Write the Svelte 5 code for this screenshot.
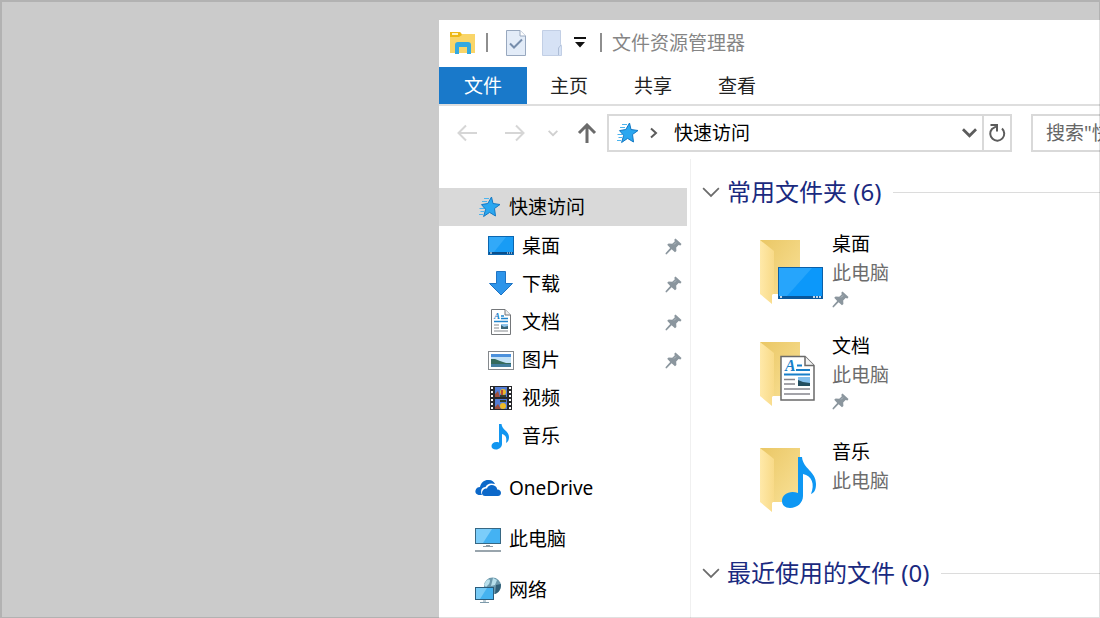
<script>
  let showFolders = $state(true);
  let showRecent = $state(true);

  const tabs = ['主页', '共享', '查看'];

  const pinned = [
    { name: '桌面', icon: 'desktop', pin: true },
    { name: '下载', icon: 'download', pin: true },
    { name: '文档', icon: 'document', pin: true },
    { name: '图片', icon: 'picture', pin: true },
    { name: '视频', icon: 'video', pin: false },
    { name: '音乐', icon: 'music', pin: false },
  ];

  const places = [
    { name: 'OneDrive', icon: 'onedrive' },
    { name: '此电脑', icon: 'computer' },
    { name: '网络', icon: 'network' },
  ];

  const folders = [
    { name: '桌面', place: '此电脑', icon: 'desktop', pin: true },
    { name: '文档', place: '此电脑', icon: 'document', pin: true },
    { name: '音乐', place: '此电脑', icon: 'music', pin: false },
  ];
</script>

{#snippet star()}
  <svg width="26" height="24" viewBox="0 0 26 24" aria-hidden="true">
    <path d="M16.500 2 L18 8.500 L25 9.500 L19.500 13.500 L20.500 21 L14.600 17.400 L8.600 21.500 L10.600 14.400 L6.500 9.600 L12.800 8.500 Z" fill="#2aa7f0" stroke="#1479c4" stroke-width="1" />
    <path d="M9 3.500 H14 M7 6.500 H12 M4.500 13.500 H9 M5.500 16.500 H9 M4 19.500 H8" stroke="#4db4ee" stroke-width="1.200" />
  </svg>
{/snippet}

{#snippet pin()}
  <svg class="pin" width="17" height="17" viewBox="0 0 17 17" aria-hidden="true">
    <path d="M10.500 0.500 L16.500 6 L15.500 7.500 L13.600 7 L11.200 9.400 L11.400 13 L10 14.200 L6.600 11.200 L1.500 16.400 L0.500 16 L0.700 15 L5.200 10 L2.200 6.800 L3.600 5.400 L7.200 5.800 L9.700 3.400 L9.400 1.600 Z" fill="#8b969e" />
    <path d="M9 6.500 L11 4.500" stroke="#b4bdc3" stroke-width="1" />
  </svg>
{/snippet}

{#snippet chevron(width, color, weight)}
  <svg {width} height={width} viewBox="0 0 16 16" fill="none" aria-hidden="true">
    <path d="M1 4.500 L8 11.500 L15 4.500" stroke={color} stroke-width={weight} />
  </svg>
{/snippet}

{#snippet glyph(name)}
  <svg width="26" height="28" viewBox="0 0 26 28" aria-hidden="true">
    {#if name === 'desktop'}
      <rect x="0.500" y="4.500" width="25" height="18" fill="#189cf5" stroke="#0b66b0" />
      <path d="M1 5 H18 L6 20 H1 Z" fill="#32a9f8" />
      <rect x="1" y="20" width="24" height="2" fill="#0a4f8c" />
      <path d="M2 21 H4 M19 21 H20 M21 21 H22 M23 21 H24" stroke="#fff" stroke-width="1" />
    {:else if name === 'download'}
      <path d="M8.500 1.500 H17.500 V13.500 H24.500 L13 25 L1.500 13.500 H8.500 Z" fill="#2e95ea" stroke="#1f74c4" />
    {:else if name === 'document'}
      <path d="M3.500 1.500 H17 L22.500 7 V26.500 H3.500 Z" fill="#fff" stroke="#74777a" />
      <path d="M17 1.500 V7 H22.500" fill="#eee" stroke="#74777a" />
      <text x="6" y="11" class="mini-letter">A</text>
      <path d="M13 8 H16 M13 10.500 H20 M6 13.500 H20" stroke="#2184cc" stroke-width="1.500" />
      <path d="M6 17 H11 M6 20 H11 M6 23 H20" stroke="#85898d" />
      <rect x="13" y="16" width="7" height="5" fill="#3a6576" />
      <path d="M13 16 H20 V18 L16 19 L13 17 Z" fill="#8fc5ed" />
    {:else if name === 'picture'}
      <rect x="0.500" y="5.500" width="25" height="18" fill="#fff" stroke="#85898d" />
      <rect x="3" y="8" width="20" height="13" fill="#c3e2f7" />
      <rect x="3" y="8" width="20" height="3" fill="#4c91dc" />
      <path d="M3 13 L7 13 L12 15 L18 17 L23 17 V18 H3 Z" fill="#356a5c" />
      <rect x="3" y="18" width="20" height="3" fill="#437e9e" />
    {:else if name === 'video'}
      <rect x="2" y="2" width="22" height="24" fill="#26272a" />
      <path d="M4 3 V26 M22 3 V26" stroke="#fff" stroke-width="2" stroke-dasharray="2 2" />
      <rect x="7" y="3" width="12" height="10" fill="#557ed4" />
      <rect x="7" y="15" width="12" height="10" fill="#557ed4" />
      <path d="M7 10 L10 7 L12 13 H7 Z M7 23 L10 20 L13 25 H7 Z" fill="#9d4e3d" />
      <circle cx="15" cy="8" r="3" fill="#e8b82c" />
      <circle cx="15" cy="22" r="3" fill="#efbc26" />
      <path d="M12 12 H18 M12 17 H18" stroke="#34412b" stroke-width="2" />
      <path d="M14 6 V11" stroke="#bc4c30" stroke-width="2" />
    {:else if name === 'music'}
      <path d="M11 2 H13.500 C14 8 21 9 21 15 C21 18 20 20 18 21 C19 16 18 13 14 12 V22 C14 25 11 27.500 8 27.500 C5 27.500 3.500 26 3.500 24 C3.500 21 7 19 11 20.500 Z" fill="#1296f0" />
    {:else if name === 'onedrive'}
      <path d="M5 21 C1 21 0 18.500 0.500 16.500 C1 14 3 13 5 13 C6 8 10 5.500 14 6 C17 6 19 8 20 10 C15 8.500 12 10 10.500 13 C6.500 13 5 17 7 21 Z" fill="#0c68c9" />
      <path d="M10 22 C7 22 6.500 19 7.500 17 C8.500 15 10 14.500 12 14.500 C13 11 17 10 20 12 C21.500 13 22 14 22.200 15.500 C25 15.500 26 17.500 26 19 C26 21 24.500 22 23 22 Z" fill="#0c68c9" />
    {:else if name === 'computer'}
      <rect x="0.500" y="3.500" width="25" height="15" fill="#44b2f3" stroke="#376783" />
      <path d="M1 4 H17 L8 18 H1 Z" fill="#7bcdfa" />
      <path d="M8 21.500 H18" stroke="#8d9ba4" />
      <path d="M11 20.500 H15" stroke="#8d9ba4" />
      <rect x="0" y="25" width="26" height="2" fill="#99a5ad" />
    {:else if name === 'network'}
      <circle cx="17.500" cy="10" r="8.500" fill="#6d99ac" />
      <path d="M11 5 C15 2 16 4 14 8 L11 11 L9 9 Z M18 2 L22 4 L20 9 L16 10 Z" fill="#b9e0ec" />
      <path d="M21 9 L26 8 C26 14 23 17 20 18 Z" fill="#315f78" />
      <rect x="0.500" y="11.500" width="18" height="12" fill="#45b3f0" stroke="#2a5c7c" />
      <path d="M1 12 H12 L5 23 H1 Z" fill="#78cbf6" />
      <path d="M5 26.500 H14 M8 25 H11" stroke="#7d9aaa" />
    {/if}
  </svg>
{/snippet}

{#snippet folder(name)}
  <svg width="64" height="66" viewBox="0 0 64 66" aria-hidden="true">
    <defs>
      <linearGradient id="back-{name}" x1="0" y1="0" x2="1" y2="1">
        <stop offset="0" stop-color="#eac765" />
        <stop offset="1" stop-color="#f9e197" />
      </linearGradient>
      <linearGradient id="front-{name}" x1="0" y1="0" x2="1" y2="0">
        <stop offset="0" stop-color="#ffe9a9" />
        <stop offset="1" stop-color="#f8da88" />
      </linearGradient>
    </defs>
    <path d="M1 1 H41 V55 H12 Z" fill="url(#back-{name})" />
    <path d="M1 1 L15 12 V54 L13 56 V65 L1 55 Z" fill="url(#front-{name})" />
    {#if name === 'desktop'}
      <rect x="19.500" y="28.500" width="44" height="31" fill="#0c98fa" stroke="#0b5fa8" />
      <path d="M20 29 H53 L28 57 H20 Z" fill="#26a5fc" />
      <rect x="20" y="57" width="43" height="3" fill="#08579c" />
      <path d="M21 58 H23 M54 58 H56 M57 58 H59 M60 58 H62" stroke="#fff" stroke-width="1.500" />
    {:else if name === 'document'}
      <path d="M22 15.500 H46 L55 24.500 V59 H22 Z" fill="#fff" stroke="#6a6a6a" stroke-width="1.500" />
      <path d="M46 15.500 V24.500 H55" fill="#f3f3f3" stroke="#6a6a6a" stroke-width="1.500" />
      <text x="26" y="30" class="big-letter">A</text>
      <path d="M38 24.500 H43 M37 29 H51 M25 33.500 H51" stroke="#187fc9" stroke-width="2" />
      <path d="M25 38.500 H36 M25 43 H36 M25 48 H51 M25 53 H51" stroke="#85858d" stroke-width="1.500" />
      <rect x="39" y="36" width="12" height="9" fill="#83bfed" />
      <path d="M39 39 L44 41 L51 42 V45 H39 Z" fill="#234e60" />
    {:else if name === 'music'}
      <path d="M39 10 H43 C44 22 57 24 57 37 C57 43 55 46 52 47 C56 37 53 29 44 27 V49 C44 56 38 61 31 61 C26 61 23 58 23 54 C23 47 31 43 39 46 Z" fill="#0e97f3" />
    {/if}
  </svg>
{/snippet}

<div class="desktop">
  <main class="window">
    <header class="titlebar">
      <svg width="26" height="24" viewBox="0 0 26 24" aria-hidden="true">
        <path d="M0 1 H10 L12 3 H25 V22 H0 Z" fill="#f9d568" />
        <path d="M0 1 H10 L12 4 L9 6 H0 Z" fill="#edb818" />
        <path d="M2 3 H8" stroke="#fff3bf" stroke-width="2" />
        <path d="M5 23 V14 Q5 11 8 11 H18 Q21 11 21 14 V23 H17 V16 H9 V23 Z" fill="#32a9e2" />
      </svg>
      <span class="divider"></span>
      <button class="quick" aria-label="属性">
        <svg width="20" height="26" viewBox="0 0 20 26" aria-hidden="true">
          <path d="M0.500 0.500 H14 L19.500 6 V25.500 H0.500 Z" fill="#e3ecf8" stroke="#98a8bf" />
          <path d="M14 0.500 V6 H19.500" fill="#fff" stroke="#98a8bf" />
          <path d="M4 13.500 L8 17.500 L16 9.500" fill="none" stroke="#778eac" stroke-width="2" />
        </svg>
      </button>
      <button class="quick" aria-label="新建文件夹">
        <svg width="20" height="26" viewBox="0 0 20 26" aria-hidden="true">
          <path d="M0.500 0.500 H18.500 V14 L19.500 16 V25.500 H0.500 Z" fill="#d6e2f5" stroke="#c2cfe5" />
          <path d="M16.500 25 V18 L19 15" fill="none" stroke="#aebed7" />
        </svg>
      </button>
      <button class="quick narrow" aria-label="自定义快速访问工具栏">
        <svg width="12" height="11" viewBox="0 0 12 11" aria-hidden="true">
          <path d="M0 0 H12 V2 H0 Z M1 5 H11 L6 10.500 Z" fill="#111" />
        </svg>
      </button>
      <span class="divider"></span>
      <h1>文件资源管理器</h1>
    </header>

    <nav class="tabs">
      <button class="tab file">文件</button>
      {#each tabs as tab}
        <button class="tab">{tab}</button>
      {/each}
    </nav>

    <div class="toolbar">
      <button class="arrow" aria-label="后退">
        <svg width="20" height="20" viewBox="0 0 20 20" aria-hidden="true">
          <path d="M20 10 H2 M9 2.500 L1.500 10 L9 17.500" fill="none" stroke="#d6d6d6" stroke-width="2" />
        </svg>
      </button>
      <button class="arrow" aria-label="前进">
        <svg width="20" height="20" viewBox="0 0 20 20" aria-hidden="true">
          <path d="M0 10 H18 M11 2.500 L18.500 10 L11 17.500" fill="none" stroke="#d6d6d6" stroke-width="2" />
        </svg>
      </button>
      <button class="history" aria-label="最近浏览的位置">{@render chevron(10, '#d0d0d0', 3)}</button>
      <button class="up" aria-label="上移">
        <svg width="20" height="20" viewBox="0 0 20 20" aria-hidden="true">
          <path d="M10 20 V2 M2 10 L10 2 L18 10" fill="none" stroke="#6b6b6b" stroke-width="3" />
        </svg>
      </button>
      <div class="address">
        {@render star()}
        <svg class="crumb-arrow" width="8" height="12" viewBox="0 0 8 12" aria-hidden="true">
          <path d="M1 1.500 L6 6 L1 10.500" fill="none" stroke="#5c5c5c" stroke-width="2" />
        </svg>
        <button class="crumb">快速访问</button>
        <button class="drop" aria-label="以前的位置">{@render chevron(15, '#5c5c5c', 3)}</button>
        <button class="refresh" aria-label="刷新">
          <svg width="18" height="20" viewBox="0 0 18 20" aria-hidden="true">
            <path d="M14 5.500 A7 7 0 1 1 4 6 L8 3.500" fill="none" stroke="#5c5c5c" stroke-width="2" />
            <path d="M2.500 2 H9 V8.500" fill="none" stroke="#5c5c5c" stroke-width="2" />
          </svg>
        </button>
      </div>
      <input class="search" type="search" aria-label="搜索" placeholder={'搜索"快速访问"'} />
    </div>

    <div class="body">
      <nav class="sidebar">
        <a class="row selected" href="#quick">{@render star()}<span>快速访问</span></a>
        <ul class="pinned">
          {#each pinned as item}
            <li>
              <a class="row child" href="#{item.icon}">
                {@render glyph(item.icon)}
                <span>{item.name}</span>
                {#if item.pin}{@render pin()}{/if}
              </a>
            </li>
          {/each}
        </ul>
        <ul class="places">
          {#each places as item}
            <li><a class="row" href="#{item.icon}">{@render glyph(item.icon)}<span>{item.name}</span></a></li>
          {/each}
        </ul>
      </nav>

      <section class="content">
        <h2>
          <button aria-expanded={showFolders} onclick={() => (showFolders = !showFolders)}>
            {@render chevron(18, '#6b6b6b', 1.5)}常用文件夹 (6)
          </button>
        </h2>
        {#if showFolders}
          <ul class="tiles">
            {#each folders as item}
              <li class="tile" class:unpinned={!item.pin}>
                {@render folder(item.icon)}
                <div class="label">
                  <p class="name">{item.name}</p>
                  <p class="place">{item.place}</p>
                  {#if item.pin}{@render pin()}{/if}
                </div>
              </li>
            {/each}
          </ul>
        {/if}
        <h2>
          <button aria-expanded={showRecent} onclick={() => (showRecent = !showRecent)}>
            {@render chevron(18, '#6b6b6b', 1.5)}最近使用的文件 (0)
          </button>
        </h2>
      </section>
    </div>
  </main>
</div>

<style>
  .desktop {
    position: relative;
    display: flex;
    box-sizing: border-box;
    min-height: 100vh;
    padding: 20px 0 0 439px;
    overflow: hidden;
    background: #cbcbcb;
    color: #000;
    font-family: "Noto Sans", "Noto Sans CJK SC", sans-serif;
    font-size: 19px;
    line-height: 28px;
  }

  /* thin frame lying over everything */
  .desktop::after {
    content: "";
    position: absolute;
    inset: 0;
    border: solid rgba(0, 0, 0, 0.12);
    border-width: 2px 1px 1px 2px;
    pointer-events: none;
  }

  .window {
    display: flex;
    flex: 1;
    flex-direction: column;
    min-width: 0;
    background: #fff;
  }

  svg {
    display: block;
    flex: none;
  }

  button {
    display: flex;
    flex: none;
    align-items: center;
    justify-content: center;
    padding: 0;
    border: 0;
    background: none;
    color: inherit;
    font: inherit;
  }

  ul {
    margin: 0;
    padding: 0;
    list-style: none;
  }

  a {
    color: inherit;
    text-decoration: none;
  }

  /* Title bar */
  .titlebar {
    display: flex;
    align-items: center;
    box-sizing: border-box;
    height: 47px;
    padding: 0 0 2px 11px;
  }

  .divider {
    width: 2px;
    height: 19px;
    margin: 0 10px;
    background: #8e8e8e;
  }

  .quick {
    width: 36px;
    height: 36px;
  }

  .quick.narrow {
    width: 20px;
  }

  h1 {
    margin: 0;
    color: #858585;
    font-size: 19px;
    font-weight: 400;
  }

  /* Ribbon tabs */
  .tabs {
    display: flex;
    border-bottom: 2px solid #dedede;
  }

  .tab {
    width: 84px;
    height: 37px;
    color: #222;
  }

  .tab.file {
    width: 88px;
    background: #1979ca;
    color: #fff;
  }

  /* Navigation and address */
  .toolbar {
    display: flex;
    align-items: center;
    height: 53px;
    overflow: hidden;
  }

  .arrow {
    width: 48px;
    height: 37px;
  }

  .arrow:first-child {
    margin-left: 4px;
  }

  .history {
    width: 28px;
    height: 37px;
  }

  .up {
    width: 40px;
    height: 37px;
  }

  .address {
    display: flex;
    flex: 0 0 405px;
    align-items: center;
    box-sizing: border-box;
    height: 38px;
    padding-left: 4px;
    border: 2px solid #d9d9d9;
  }

  .crumb-arrow {
    margin: 0 16px 0 11px;
  }

  .drop {
    width: 26px;
    height: 34px;
    margin-left: auto;
  }

  .refresh {
    width: 28px;
    height: 34px;
    border-left: 2px solid #d9d9d9;
  }

  .search {
    flex: 0 0 240px;
    box-sizing: border-box;
    height: 38px;
    margin: 0 0 0 19px;
    padding: 0 13px;
    border: 2px solid #d9d9d9;
    border-radius: 0;
    background: #fff;
    font: inherit;
    outline: none;
  }

  .search::placeholder {
    color: #666;
    opacity: 1;
  }

  .body {
    display: flex;
    flex: 1;
  }

  /* Sidebar */
  .sidebar {
    flex: 0 0 252px;
    box-sizing: border-box;
    padding: 29px 3px 0 0;
    border-right: 1px solid #f0f0f0;
  }

  .row {
    display: flex;
    align-items: center;
    gap: 8px;
    height: 38px;
    padding: 0 5px 0 36px;
  }

  .row.selected {
    background: #d9d9d9;
  }

  .row.child {
    padding-left: 49px;
  }

  .row .pin {
    margin-left: auto;
  }

  .pinned {
    padding: 1px 0;
  }

  .places li {
    padding-top: 13px;
  }

  /* Folder groups */
  .content {
    flex: 1;
    min-width: 0;
    padding: 15px 0 0 11px;
  }

  h2 {
    display: flex;
    align-items: center;
    gap: 12px;
    margin: 0 0 6px;
    color: #1a2a80;
    font-size: 24px;
    font-weight: 400;
    line-height: 36px;
  }

  h2::after {
    content: "";
    flex: 1;
    height: 1px;
    background: #dcdcdc;
  }

  h2 button {
    gap: 7px;
  }

  .tiles {
    padding: 0 0 33px 57px;
  }

  .tile {
    display: flex;
    gap: 9px;
    box-sizing: border-box;
    height: 102px;
    padding-top: 14px;
  }

  .tile.unpinned {
    padding-top: 18px;
  }

  .tile > :global(svg) {
    margin-top: 9px;
  }

  .label .pin {
    margin-top: 3px;
  }

  .name,
  .place {
    margin: 0;
    line-height: 29px;
  }

  .place {
    color: #6d6d6d;
  }

  .mini-letter,
  .big-letter {
    fill: #187fc9;
    font-family: "Liberation Serif", serif;
    font-size: 9px;
    font-style: italic;
    font-weight: 700;
  }

  .big-letter {
    font-size: 16px;
  }
</style>
